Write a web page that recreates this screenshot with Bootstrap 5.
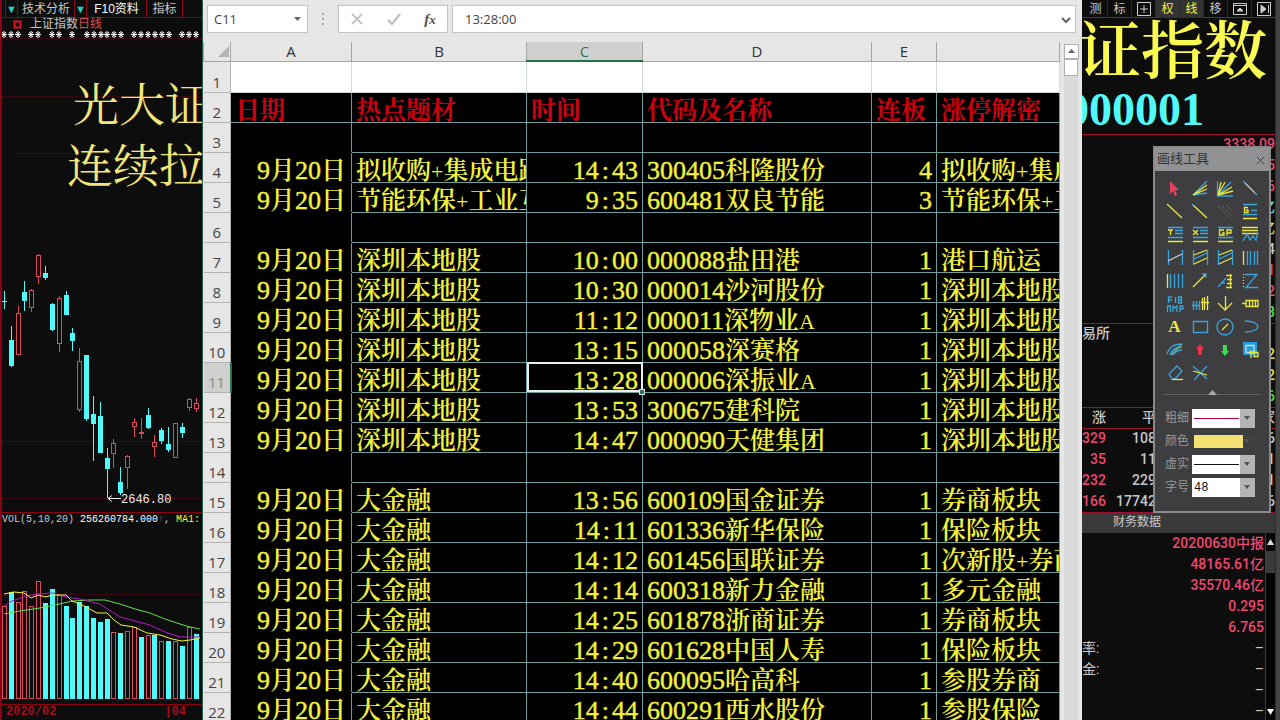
<!DOCTYPE html>
<html lang="zh-CN">
<head>
<meta charset="utf-8">
<meta name="viewport" content="width=device-width, initial-scale=1">
<title>涨停复盘</title>
<link rel="stylesheet" href="https://cdn.jsdelivr.net/npm/bootstrap@5.3.0/dist/css/bootstrap.min.css">
<style>
:root{--ui:"Liberation Sans","Noto Sans CJK SC",sans-serif;--song:"Liberation Serif","Noto Serif CJK SC","Noto Sans CJK SC",serif;--mono:"Liberation Mono","Noto Sans CJK SC",monospace}
body{background:#0d0d0d;font-family:var(--ui);font-size:12px;line-height:1.2;color:#c8c8c8}
button,select,input{font-family:inherit}
.desk{display:grid;grid-template-columns:202px minmax(0,1fr) 198px;height:100vh;overflow:hidden}
.desk svg text{font-family:var(--mono)}

/* chart side */
.chart-side{border-left:2px solid #8c0014;background:#0d0d0d}
.tabs button,.tools button{background:none;border:0;border-right:1px solid #8c0014;color:#c8c8c8;padding:0;height:18px;line-height:17px;font-size:12px;flex:none;white-space:nowrap}
.tabs{border-bottom:1px solid #8c0014;height:18px}
.tabs .drop{color:#20d0c0;width:12px;font-size:11px}
.inst{height:13px;line-height:13px;padding-left:11px;font-size:12px}
.vol-head{height:14px;line-height:14px;border-top:1px solid #8c0014;font-family:var(--mono);font-size:10px;white-space:nowrap}
.axis-row{height:16px;line-height:16px;border-top:1px solid #8c0014;color:#a80c1c;font:bold 12px/15px var(--mono)}

/* sheet */
.sheet{background:#e6e6e6;color:#444;border-left:1px solid #27584c;min-width:0}
.fbar{padding:5px 6px 5px 4px;height:38px;gap:4px}
.box{background:#fff;border:1px solid #c3c3c3;height:28px}
.box input{border:0;background:none;outline:0;color:#444;font:13px/26px "Open Sans",sans-serif;width:100%;min-width:0;padding:0 0 0 6px}
.namebox{width:101px;position:relative}
.fx{width:110px}
.fx button,.plain{background:none;border:0;padding:0}
.grid-wrap{width:100%;min-width:0;overflow:hidden}
.cells{table-layout:fixed;width:100%;border-collapse:collapse;font-family:var(--song)}
.cells th,.cells td{height:30px;overflow-x:clip;white-space:nowrap;border:1px solid #6f9c9f}
.cells thead th{height:19px;border:1px solid #a6a6a6;border-top:0;font:15px/17px "Open Sans",sans-serif;text-align:center;vertical-align:middle;color:#333;background:#e6e6e6;padding:0}
.cells thead th.on{background:#d0d0d0;color:#38745c;border-bottom:2px solid #217346}
.cells tbody th{font:15px/20px "Open Sans",sans-serif;color:#444;text-align:center;vertical-align:bottom;background:#e6e6e6;border:1px solid #b4b4b4;border-left:0;padding:0}
.cells tbody th.on{background:#cfcfcf;color:#7d8d86;border-right:2px solid #217346}
.cells td{background:#000;color:#f2f23c;font-size:25px;line-height:22px;font-weight:600;padding:7px 4px 0;vertical-align:top}
.cells td .num{font-size:26px;line-height:0;font-weight:400;-webkit-text-stroke:.4px}
.cells td .colon{padding:0 3px}
.cells td .latin{font-size:22px;line-height:0;font-weight:400}
.cells td:nth-child(2){border-top-color:#000;border-bottom-color:#000;padding-right:5px}
.cells tr.blank td{background:#fff;border-color:#d4dada;height:31px}
.cells tr.head td{color:#cc0010;font-weight:700;border-color:#6f9c9f}
.cells td.r{text-align:right}
.cells td.sel{position:relative;overflow:visible;outline:2px solid #e8f0ec;outline-offset:-2px}
.cells td.sel::after{content:"";position:absolute;right:-3px;bottom:-3px;width:6px;height:6px;background:#3d6b59;border:1px solid #d8e4de}
.vbar{width:22px;flex:none;padding:2px 4px 0 4px}
.vbar .plain{display:block;width:15px;height:15px;background:#fff;border:1px solid #b0b0b0;line-height:0}
.vbar .track{background:#d9d9d9;flex:1}
.vbar .thumb{height:17px;background:#fff;border:1px solid #b0b0b0}

/* quote side */
.quote{background:#0d0d0d;border-right:4px solid #444;position:relative;white-space:nowrap}
.quote .inner{border-right:1px solid #8c0014;height:100%;overflow:hidden}
.tools{border-bottom:1px solid #a01030;height:18px;padding-left:2px}
.tools button{width:24px;font-size:12px}
.tools .lit{background:#333;color:#f4f43a}
.bigname{font:600 63px/68px var(--song);color:#fafa50;display:flex;justify-content:flex-end;padding-right:8px}
.bigcode{font:bold 46px/48px var(--song);color:#50fafa;display:flex;justify-content:flex-end;padding-right:71px}
.bigname,.bigcode{position:relative;top:0}
.qrow{height:21px;line-height:21px;font:500 14px/21px Roboto,"Noto Sans CJK SC",sans-serif;text-align:right;flex:none}
.rule{box-shadow:inset 0 1px #a01030}
.pk{color:#f04870}.gn{color:#40f040}.yl{color:#e8e840}.cy{color:#50f0f0}
.dim{color:#c8c8c8;font-weight:400}
.counts td{padding:0;height:21px;font:500 14px/21px Roboto,"Noto Sans CJK SC",sans-serif;text-align:right}
.fin-head{background:#3a3a3a;height:21px;line-height:20px;font-size:12px;padding-left:31px}
.fin{margin:0;padding-right:1px}
.vs{width:10px;background:#050505;border-left:1px solid #a01030}

/* drawing palette */
.palette{position:absolute;left:71px;top:146px;width:118px;height:367px;background:#3e3e41;border:2px solid #8a8a8a;z-index:2}
.palette header{background:#929294;color:#333;height:23px;padding:0 4px 0 2px;font-size:13px;line-height:22px}
.icons{display:grid;grid-template-columns:repeat(4,25px);justify-content:center;padding-top:6px;grid-auto-rows:23px}
.icons button{background:none;border:0;padding:0;line-height:0}
.icons svg{width:24px;height:22px;fill:none;stroke-width:1.3}
.b{stroke:#3aa4dc}.y{stroke:#e8e840}.w{stroke:#ccc}
.split{border-top:1px solid #5c5c5e;margin:10px 8px 0;height:13px;line-height:0;text-align:center}
.split svg{margin-top:-5px;vertical-align:top}
.field{height:23px;display:flex;align-items:center;padding-left:10px;font-size:12px;color:#999}
.field label{width:27px}
.pick{position:relative;width:63px;height:19px}
.pick select{appearance:none;border:0;border-radius:0;width:100%;height:19px;background:linear-gradient(90deg,#fff 48px,#b4b4b6 48px);padding:0 0 0 2px;font:12px/18px var(--mono);color:#111;display:block}
.pick::after{content:"";position:absolute;right:5px;top:7px;border:3px solid transparent;border-top:4px solid #555;pointer-events:none}
.pick hr{position:absolute;left:2px;top:9px;width:45px;margin:0;opacity:1;border-top:1px solid #111;pointer-events:none}
.pick hr.crim{border-color:#b00040}
.pick.tint select{background:linear-gradient(#f2e070,#f2e070) 2px 3px/49px 13px no-repeat}
</style>
</head>
<body>
<main class="desk">

<section class="chart-side d-flex flex-column overflow-hidden">
  <nav class="tabs d-flex">
    <button style="width:4px" aria-label="栏"></button><button class="drop">▼</button><button class="px-1" style="width:57px">技术分析</button><button class="drop">▼</button><button style="width:60px" class="text-white">F10资料</button><button style="width:36px">指标</button>
  </nav>
  <div class="inst d-flex align-items-center gap-2"><svg width="9" height="9"><rect x="1.500" y="1.500" width="6" height="6" fill="none" stroke="#e01020" stroke-width="2"/></svg><span>上证指数<span style="color:#d85050">日线</span></span></div>
  <svg id="price" width="200" height="481" viewBox="2 31 200 481" class="flex-shrink-0">
    <path d="M2 38.500H202M2 96.500H202M16 153.500H202M2 441.500H202M2 498.500H202" stroke="#38060e"/>
    <g id="stars" stroke="#fff"></g>
    <g id="candles"></g>
    <g fill="#f2e67a" font-size="46"><text x="73" y="121" style="font-family:'Noto Serif CJK SC','Noto Sans CJK SC',serif;font-weight:400">光大证券</text><text x="67" y="182" style="font-family:'Noto Serif CJK SC','Noto Sans CJK SC',serif;font-weight:400">连续拉升</text></g>
    <path d="M108 498.500h13m-9-3l-4 3 4 3" fill="none" stroke="#eee"/>
    <text x="121" y="503" font-size="12" fill="#eee">2646.80</text>
  </svg>
  <div class="vol-head">VOL(5,10,20) <span class="text-white">256260784.000</span><span style="color:#d85050">↑</span>, <span style="color:#f4f43a">MA1:</span></div>
  <svg id="volume" width="200" height="178" viewBox="2 526 200 178" class="flex-shrink-0">
    <path d="M2 594.500H202" stroke="#38060e"/>
    <g id="bars"></g>
    <g fill="none">
      <path stroke="#60e040" d="M4 614L20 611 40 608 55 605 72 601 90 600 105 600 120 604 135 609 150 613 165 619 180 624 190 627 200 629"/>
      <path stroke="#b818c8" d="M4 606L12 601 24 597 36 594 52 593 66 597 80 599 100 604 120 617 135 621 150 625 165 632 180 637 200 637"/>
      <path stroke="#f4f43a" d="M4 594L14 592 24 593 31 598 38 595 46 597 52 595 66 595 72 601 80 604 86 607 97 613 107 613 114 620 121 625 134 627 147 633 160 635 172 639 182 641 190 640 200 638"/>
    </g>
  </svg>
  <div class="axis-row d-flex justify-content-between"><span class="ps-1">2020/02</span><span class="pe-3">|04</span></div>
</section>

<section class="sheet d-flex flex-column overflow-hidden">
  <div class="fbar d-flex flex-shrink-0">
    <div class="box namebox"><input value="C11" aria-label="名称框"><svg class="position-absolute" style="right:5px;top:10px" width="9" height="6"><path d="M1 1h7L4.500 5z" fill="#666"/></svg></div>
    <svg width="22" height="28"><path d="M10 8h2v2h-2zM10 13h2v2h-2zM10 18h2v2h-2z" fill="#aaa"/></svg>
    <div class="box fx d-flex justify-content-around align-items-center">
      <button aria-label="取消"><svg width="14" height="14"><path d="M2 2l10 10M12 2L2 12" stroke="#c4c4c4" stroke-width="2"/></svg></button>
      <button aria-label="输入"><svg width="16" height="14"><path d="M2 8l4 4 8-10" stroke="#c4c4c4" stroke-width="2.500" fill="none"/></svg></button>
      <button aria-label="函数" style="font:italic bold 15px/20px 'Liberation Serif',serif;color:#555"><i>f</i><small>x</small></button>
    </div>
    <div class="box flex-grow-1 d-flex align-items-center"><input value="13:28:00" class="ps-2 ms-1" aria-label="编辑栏"><button class="plain pe-1" aria-label="展开"><svg width="10" height="8"><path d="M1 2l4 4 4-4" stroke="#666" stroke-width="2" fill="none"/></svg></button></div>
  </div>
  <div class="d-flex flex-grow-1 overflow-hidden pt-1">
    <div class="grid-wrap">
      <table class="cells">
        <colgroup><col style="width:27px"><col style="width:121px"><col style="width:175px"><col style="width:116px"><col style="width:229px"><col style="width:65px"><col></colgroup>
        <thead><tr><th scope="col" aria-label="全选"><svg width="27" height="18" class="d-block"><path d="M25 4v11H14z" fill="#b4b4b4"/></svg></th><th scope="col">A</th><th scope="col">B</th><th scope="col" class="on">C</th><th scope="col">D</th><th scope="col">E</th><th scope="col"></th></tr></thead>
        <tbody id="rows"></tbody>
      </table>
    </div>
    <div class="vbar d-flex flex-column"><button class="plain" aria-label="向上"><svg width="13" height="13"><path d="M3 8h7L6.500 4z" fill="#666"/></svg></button><div class="track"><div class="thumb"></div></div></div>
  </div>
</section>

<aside class="quote">
  <div class="inner d-flex flex-column">
    <nav class="tools d-flex flex-shrink-0">
      <button>测</button><button>标</button><button aria-label="网格"><svg width="14" height="14" fill="none" stroke="#ccc"><path d="M.5.5h13v13H.5zM3 7h8M7 3v8"/></svg></button><button class="lit">权</button><button class="lit">线</button><button>移</button><button aria-label="弹出"><svg width="14" height="14" fill="none" stroke="#ccc"><path d="M.5 1.500h13v11H.5zM.5 3.500h13"/><path d="M4 9h6L7 6z" fill="#ccc"/></svg></button><button aria-label="前进"><svg width="14" height="14" fill="none" stroke="#ccc"><path d="M.5.5h13v13H.5zM11.500 3v8"/><path d="M4 3v8l5-4z" fill="#ccc"/></svg></button>
    </nav>
    <div class="bigname">上证指数</div>
    <div class="bigcode">000001</div>
    <div class="rule">
      <div class="qrow pk">3338.09</div><div class="qrow pk">3.15</div><div class="qrow pk">0.16</div><div class="qrow cy">亿</div><div class="qrow yl">亿</div><div class="qrow">4</div><div class="qrow pk">1</div><div class="qrow pk">2</div><div class="qrow gn">3</div>
    </div>
    <div class="rule">
      <div class="qrow text-start">易所</div><div class="qrow yl">2</div><div class="qrow yl">2</div><div class="qrow gn">6</div>
    </div>
    <table class="counts rule w-100">
      <thead><tr><td style="width:22px">涨</td><td style="width:50px">平</td><td>家</td></tr></thead>
      <tbody class="rule"><tr><td class="pk">329</td><td>108</td><td>6</td></tr><tr><td class="pk">35</td><td>11</td><td>1</td></tr><tr><td class="pk">232</td><td>229</td><td>1</td></tr><tr><td class="pk">166</td><td>17742</td><td>6</td></tr></tbody>
    </table>
    <div class="fin-head rule flex-shrink-0">财务数据</div>
    <div class="d-flex flex-grow-1 overflow-hidden">
      <div class="fin flex-grow-1 pk">
        <div class="qrow">20200630中报</div><div class="qrow">48165.61亿</div><div class="qrow">35570.46亿</div><div class="qrow">0.295</div><div class="qrow">6.765</div>
        <div class="qrow dim d-flex justify-content-between"><span>率:</span><span>–</span></div><div class="qrow dim d-flex justify-content-between"><span>金:</span><span>–</span></div><div class="qrow dim">–</div><div class="qrow dim">–</div>
      </div>
      <div class="vs d-flex flex-column justify-content-between"><svg width="9" height="40"><path d="M0 18h9v22H0z" fill="#3c3c3c"/><path d="M1 12h7L4.500 6z" fill="#ddd"/></svg><svg width="9" height="16"><path d="M1 3h7L4.500 9z" fill="#fff"/></svg></div>
    </div>
  </div>

  <section class="palette">
    <header class="d-flex justify-content-between"><span>画线工具</span><button class="plain" aria-label="关闭"><svg width="9" height="9"><path d="M1 1l7 7M8 1L1 8" stroke="#444"/></svg></button></header>
    <div class="icons">
      <button aria-label="选择"><svg viewBox="0 0 24 22"><path d="M7 3v13l3-3 2 5 2-1-2-5h4z" fill="#e84060"/></svg></button>
      <button aria-label="射线组"><svg viewBox="0 0 24 22"><path class="b" d="M5 17L19 3M5 17l14-2"/><path class="y" d="M5 17L19 7M5 17l14-6"/></svg></button>
      <button aria-label="扇形"><svg viewBox="0 0 24 22"><path class="b" d="M4.500 3v15H20M5 17L18 4"/><path class="y" d="M5 17L8 4M5 17l7-13M5 17l14-8M5 17l15-4"/></svg></button>
      <button aria-label="线段"><svg viewBox="0 0 24 22"><path class="w" d="M7 5l10 10"/><path class="b" d="M5 3l2 2M17 15l2 2"/></svg></button>
      <button aria-label="直线"><svg viewBox="0 0 24 22"><path class="y" d="M4 3l15 14"/></svg></button>
      <button aria-label="趋势线"><svg viewBox="0 0 24 22"><path class="y" d="M5 4l14 13"/><path class="b" d="M4 3l2 2"/></svg></button>
      <button aria-label="平行线"><svg viewBox="0 0 24 22"><path stroke="#666" stroke-dasharray="1 1" d="M5 5l11 11M9 5l9 9M13 4l6 6"/></svg></button>
      <button aria-label="黄金线"><svg viewBox="0 0 24 22"><path class="b" d="M5 3.500h14M13 9.500h6M5 13.500h14"/><path class="y" d="M5 17.500h14M10 6.500H6.500v5H10V9H8"/></svg></button>
      <button aria-label="目标线"><svg viewBox="0 0 24 22"><path class="b" d="M5 3.500h15M12 6.500h8M12 9.500h8M5 13.500h15"/><path class="y" d="M5 17.500h15M5 6h5M7.500 6v5"/></svg></button>
      <button aria-label="百分比线"><svg viewBox="0 0 24 22"><path class="b" d="M5 3.500h15M12 6.500h8M12 9.500h8M5 13.500h15"/><path class="y" d="M5 17.500h15M5 6l5 5M10 6l-5 5"/></svg></button>
      <button aria-label="黄金价位"><svg viewBox="0 0 24 22"><path class="b" d="M5 3.500h15M5 13.500h15"/><path class="y" d="M5 17.500h15M11 6H6.500v5H11V9H9M14 11.500V6h4v3h-4"/></svg></button>
      <button aria-label="波段线"><svg viewBox="0 0 24 22"><path class="y" d="M4 3.500h16M4 6.500h16M4 9.500h16"/><path class="b" d="M5 17l4-7 3 6 3-4 3 4 2-8"/></svg></button>
      <button aria-label="通道"><svg viewBox="0 0 24 22"><path class="b" d="M5.500 3v15M19.500 3v15"/><path class="w" d="M5 14l14-7"/></svg></button>
      <button aria-label="平行通道"><svg viewBox="0 0 24 22"><path class="b" d="M5.500 3v15M19.500 3v15M6 12l13-6"/><path class="y" d="M6 8l13-5M6 17l13-6"/></svg></button>
      <button aria-label="回归通道"><svg viewBox="0 0 24 22"><path class="b" d="M5.500 3v15M19.500 3v15M6 12l13-6"/><path class="y" d="M6 8l13-5M6 17l13-6"/></svg></button>
      <button aria-label="周期线"><svg viewBox="0 0 24 22"><path class="b" d="M9.500 4v14M12.500 4v14M16.500 4v14M19.500 4v14"/><path class="y" d="M5.500 4v14"/></svg></button>
      <button aria-label="等周期线"><svg viewBox="0 0 24 22"><path class="b" d="M7.500 4v14M11.500 4v14M15.500 4v14M19.500 4v14"/><path class="y" d="M4.500 4v14"/></svg></button>
      <button aria-label="箭头线"><svg viewBox="0 0 24 22"><path class="y" d="M5 17L18 4"/><path class="b" d="M14 4h4v4"/></svg></button>
      <button aria-label="度量尺"><svg viewBox="0 0 24 22"><path class="b" d="M5 17l8-9M8 13h4"/><path class="y" d="M17.500 4v14M13 5.500h6M14 9.500h5M14 13.500h5M13 17.500h6"/></svg></button>
      <button aria-label="折线"><svg viewBox="0 0 24 22"><path class="b" d="M7 4.500h12L8 17.500h12"/><path class="y" stroke-dasharray="1 2" d="M5.500 4v14"/></svg></button>
      <button aria-label="斐波那契"><svg viewBox="0 0 24 22"><path class="b" d="M5.500 10V4H9M5 7h4M12.500 4v6M15.500 10V4h3v6zM15 7h4M4.500 19v-6h3v6M10 19v-6l2 2 2-2v6M17 19v-6h3v3h-3"/></svg></button>
      <button aria-label="时间序列"><svg viewBox="0 0 24 22"><path class="b" d="M5.500 8v9M8.500 8v9M4 12.500h8M11.500 8v9"/><path class="y" d="M14.500 5v12M16.500 4v13M19.500 3v14M13 9.500h8"/></svg></button>
      <button aria-label="下行标"><svg viewBox="0 0 24 22"><path class="y" d="M12.500 3v14M5 10l7 7 7-7"/></svg></button>
      <button aria-label="标签"><svg viewBox="0 0 24 22"><path class="y" d="M4 10.500h4M8 7.500h12v6H8zM11.500 8v5M14.500 8v5M17.500 8v5"/></svg></button>
      <button aria-label="文字" style="font:bold 17px/22px 'Liberation Serif',serif;color:#f0e840">A</button>
      <button aria-label="矩形"><svg viewBox="0 0 24 22"><path class="b" d="M5.500 5.500h14v11h-14z"/></svg></button>
      <button aria-label="圆"><svg viewBox="0 0 24 22"><circle class="b" cx="12" cy="11" r="8"/><path class="y" d="M9 14l6-6"/></svg></button>
      <button aria-label="弧"><svg viewBox="0 0 24 22"><path class="b" d="M7 5c17 0 17 11 0 11"/></svg></button>
      <button aria-label="曲线"><svg viewBox="0 0 24 22"><path class="b" d="M4 15c3-9 9-10 15-10M7 16c2-6 6-8 12-8M10 16c2-3 4-5 9-5"/><path stroke="#6b8" d="M8 16L19 5"/></svg></button>
      <button aria-label="上箭头"><svg viewBox="0 0 24 22"><path d="M12 5l4 5h-2v6h-4v-6H8z" fill="#e83048"/></svg></button>
      <button aria-label="下箭头"><svg viewBox="0 0 24 22"><path d="M12 17l4-5h-2V6h-4v6H8z" fill="#38e050"/></svg></button>
      <button aria-label="图形设置"><svg viewBox="0 0 24 22"><path fill="#259be0" d="M5 3h14v13H5z"/><path stroke="#bdf" d="M8 6.500h8v7H8z"/><path class="y" d="M11 13.500h9v4h-4v-6M13 11v8"/></svg></button>
      <button aria-label="橡皮"><svg viewBox="0 0 24 22"><path class="b" d="M6 12l8-8 5 5-7 8H9z"/><path class="y" d="M9 17.500h11"/></svg></button>
      <button aria-label="清除"><svg viewBox="0 0 24 22"><path class="b" d="M5 4l14 13M19 4L6 18"/><path class="y" d="M5 9l14 4"/></svg></button>
    </div>
    <div class="split"><svg width="9" height="5"><path d="M0 5h9L4.500 0z" fill="#aaa"/></svg></div>
    <div class="field"><label for="f1">粗细</label><div class="pick"><select id="f1"><option></option></select><hr class="crim"></div></div>
    <div class="field"><label for="f2">颜色</label><div class="pick tint"><select id="f2"><option></option></select></div></div>
    <div class="field"><label for="f3">虚实</label><div class="pick"><select id="f3"><option></option></select><hr></div></div>
    <div class="field"><label for="f4">字号</label><div class="pick"><select id="f4"><option>48</option></select></div></div>
  </section>
</aside>
</main>

<script src="https://cdn.jsdelivr.net/npm/bootstrap@5.3.0/dist/js/bootstrap.bundle.min.js"></script>
<script>
const D='9月20日', S='深圳本地股', J='大金融';
const rows=[null,
 ['日期','热点题材','时间','代码及名称','连板','涨停解密'],[],
 [D,'拟收购+集成电路','14:43','300405科隆股份','4','拟收购+集成电路'],
 [D,'节能环保+工业互联','9:35','600481双良节能','3','节能环保+工业互联'],[],
 [D,S,'10:00','000088盐田港','1','港口航运'],
 [D,S,'10:30','000014沙河股份','1',S],
 [D,S,'11:12','000011深物业A','1',S],
 [D,S,'13:15','000058深赛格','1',S],
 [D,S,'13:28','000006深振业A','1',S],
 [D,S,'13:53','300675建科院','1',S],
 [D,S,'14:47','000090天健集团','1',S],[],
 [D,J,'13:56','600109国金证券','1','券商板块'],
 [D,J,'14:11','601336新华保险','1','保险板块'],
 [D,J,'14:12','601456国联证券','1','次新股+券商'],
 [D,J,'14:14','600318新力金融','1','多元金融'],
 [D,J,'14:25','601878浙商证券','1','券商板块'],
 [D,J,'14:29','601628中国人寿','1','保险板块'],
 [D,J,'14:40','600095哈高科','1','参股券商'],
 [D,J,'14:44','600291西水股份','1','参股保险']];
const mark=t=>t.replace(/[0-9:]+/g,m=>`<span class="num">${m.replace(':','<span class="colon">:</span>')}</span>`).replace(/[A+]/g,'<span class="latin">$&</span>');
document.getElementById('rows').innerHTML=rows.map((r,i)=>{
  const n=i+1, cls=i===0?'blank':i===1?'head':'', sel=n===11;
  const tds=[0,1,2,3,4,5].map(c=>{
    const right=i>1&&(c===0||c===2||c===4);
    return `<td class="${right?'r':''} ${sel&&c===2?'sel':''}">${mark((r&&r[c])||'')}</td>`;
  }).join('');
  return `<tr class="${cls}"><th scope="row" class="${sel?'on':''}">${n}</th>${tds}</tr>`;
}).join('');

// x, high, body top, body bottom, low, falling, volume top, volume bar filled
const k=[[4,291,301,302,309,1,606,0],[11,326,340,366,367,1,592,1],[18,306,313,355,355,0,602,0],[24,281,292,301,311,1,591,0],[31,289,290,308,312,0,606,0],[38,254,255,277,284,0,581,0],[45,266,273,278,280,1,603,1],[52,303,304,330,331,1,589,1],[59,296,298,344,352,0,595,0],[66,291,295,315,315,1,606,1],[72,328,333,341,351,1,618,1],[79,348,361,410,412,0,602,1],[86,355,355,419,421,1,606,1],[93,396,414,424,461,1,618,1],[100,402,416,453,453,1,622,1],[107,448,458,469,498,1,619,1],[113,439,443,454,468,0,632,0],[120,467,482,493,495,1,633,1],[127,455,456,468,489,0,631,0],[134,418,422,427,437,0,627,0],[141,418,432,434,439,0,637,1],[148,408,415,428,429,1,635,0],[154,435,442,447,457,0,635,1],[161,428,430,441,444,1,641,0],[168,427,444,450,452,1,641,1],[175,423,423,458,458,0,641,0],[182,423,427,433,438,1,646,1],[189,398,399,408,411,0,627,0],[196,398,403,409,412,0,634,1]];
const C='#50fafa',R='#d84c60';
const box=(x,t,b,f)=>f?`<rect x="${x-2}" y="${t}" width="5" height="${Math.max(1,b-t)}" fill="${C}"/>`:`<rect x="${x-1.5}" y="${t+.5}" width="4" height="${Math.max(1,b-t-1)}" fill="#0d0d0d" stroke="${R}"/>`;
document.getElementById('candles').innerHTML=k.map(a=>`<path d="M${a[0]+.5} ${a[1]}V${a[4]}" stroke="${a[5]?C:R}"/>`+box(a[0],a[2],a[3],a[5])).join('');
document.getElementById('bars').innerHTML=k.map(a=>box(a[0],a[6],699,a[7])).join('');
document.getElementById('stars').innerHTML=[4,11,18,31,38,52,59,72,87,94,101,107,114,121,134,141,148,155,162,169,182,189,196].map(x=>`<path d="M${x-3} 34.500h6M${x} 31v7M${x-2} 32l4 5M${x+2} 32l-4 5"/>`).join('');
</script>
</body>
</html>
